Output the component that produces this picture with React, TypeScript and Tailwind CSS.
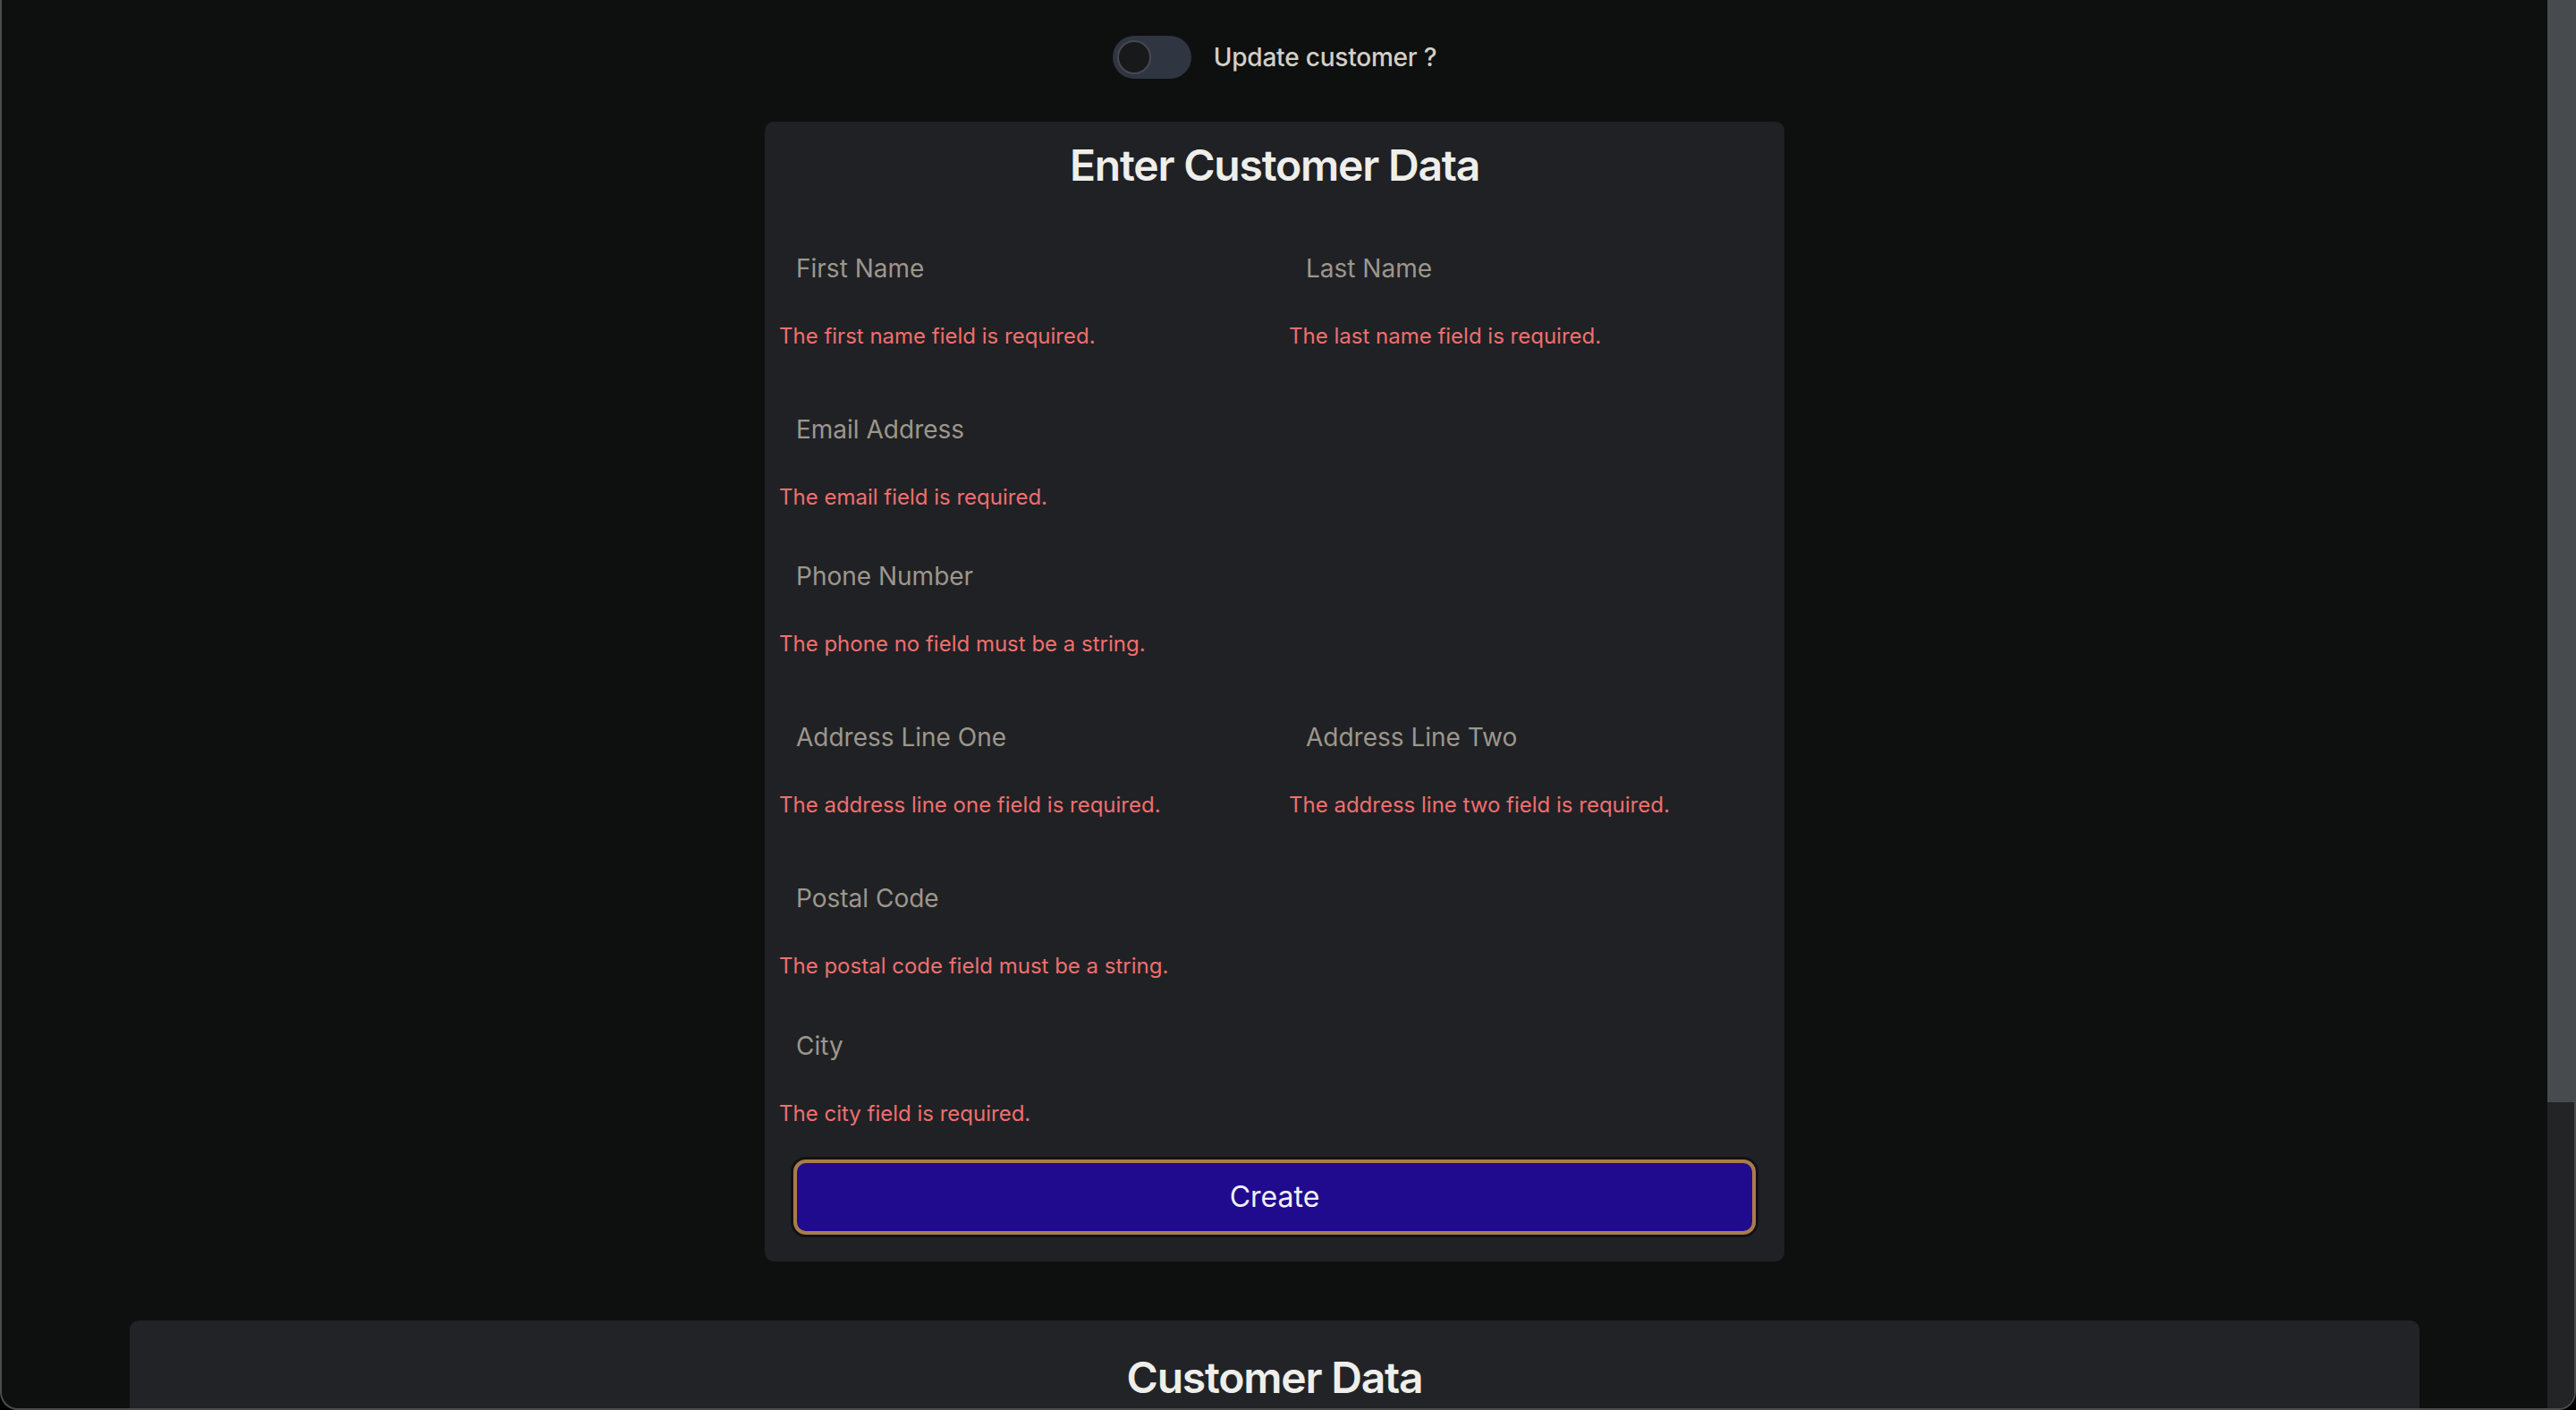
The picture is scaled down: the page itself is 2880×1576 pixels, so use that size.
import { useState } from "react"

type FieldDef = {
  placeholder: string
  error: string
}

function Field({ placeholder, error }: FieldDef) {
  return (
    <div className="flex flex-col">
      <input
        type="text"
        placeholder={placeholder}
        className="h-[80px] w-full bg-transparent pl-[19px] text-[28px] text-[#e8e6e1] outline-none placeholder:text-[#9c978d]"
      />
      <p className="mt-[20px] h-[32px] text-[24px] leading-[32px] text-[#ef6f6f]">{error}</p>
    </div>
  )
}

export default function App() {
  const [update, setUpdate] = useState(false)

  return (
    <div className="h-[1576px] w-[2880px] overflow-hidden bg-black font-['Inter','Noto_Sans',sans-serif]">
      <div className="flex h-full overflow-hidden rounded-b-[20px] border-x-2 border-b-2 border-[#4a4c4d] bg-[#0e100f]">
        <main className="flex flex-1 flex-col items-center">
          {/* toggle */}
          <div className="mt-[40px] flex items-center gap-[25px]">
            <button
              onClick={() => setUpdate(!update)}
              className={`flex h-[48px] w-[88px] items-center rounded-full bg-[#2f3541] p-[5px] ${update ? "justify-end" : "justify-start"}`}
            >
              <span className="size-[38px] rounded-full border-2 border-[#464a50] bg-[#18191b]" />
            </button>
            <span className="text-[28px] font-medium leading-[40px] tracking-[-0.2px] text-[#d3cfc7]">Update customer ?</span>
          </div>

          {/* form card */}
          <form
            onSubmit={(e) => e.preventDefault()}
            className="mt-[48px] flex w-[1140px] flex-col rounded-[10px] bg-[#202124] px-[16px] pb-[30px] pt-[17px]"
          >
            <h2 className="text-center text-[48px] font-semibold leading-[64px] tracking-[-1.2px] text-[#efeeea]">
              Enter Customer Data
            </h2>

            <div className="mt-[43px] grid grid-cols-2 gap-x-[32px]">
              <Field placeholder="First Name" error="The first name field is required." />
              <Field placeholder="Last Name" error="The last name field is required." />
            </div>

            <div className="mt-[48px]">
              <Field placeholder="Email Address" error="The email field is required." />
            </div>

            <div className="mt-[32px]">
              <Field placeholder="Phone Number" error="The phone no field must be a string." />
            </div>

            <div className="mt-[48px] grid grid-cols-2 gap-x-[32px]">
              <Field placeholder="Address Line One" error="The address line one field is required." />
              <Field placeholder="Address Line Two" error="The address line two field is required." />
            </div>

            <div className="mt-[48px]">
              <Field placeholder="Postal Code" error="The postal code field must be a string." />
            </div>

            <div className="mt-[33px]">
              <Field placeholder="City" error="The city field is required." />
            </div>

            <button
              type="submit"
              className="mx-[16px] mt-[35px] h-[84px] rounded-[14px] border-4 border-[#a97d48] bg-[#200b8e] text-[32px] text-[#f2f0f5] ring-[3px] ring-[#121214]"
            >
              Create
            </button>
          </form>

          {/* table card */}
          <section className="mt-[66px] w-[2560px] flex-1 rounded-t-[10px] bg-[#222326] pt-[32px]">
            <h2 className="text-center text-[48px] font-semibold leading-[64px] tracking-[-1.2px] text-[#efeeea]">
              Customer Data
            </h2>
          </section>
        </main>

        {/* scrollbar */}
        <div className="flex w-[30px] flex-col">
          <div className="h-[1232px] bg-[#474b4e]" />
          <div className="flex-1 bg-[#232426]" />
        </div>
      </div>
    </div>
  )
}
